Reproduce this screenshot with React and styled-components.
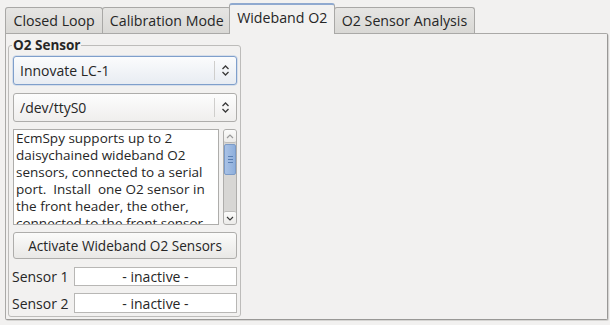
import React from "react";
import styled, { createGlobalStyle, css } from "styled-components";

const Global = createGlobalStyle`
  html, body { margin: 0; padding: 0; background: #f2f1f0; }
  body { font-family: "Open Sans", "Noto Sans", sans-serif; color: #262626; font-size: 13.5px; }
  * { box-sizing: border-box; }
`;

const Root = styled.div`
  width: 610px;
  height: 325px;
  padding: 3px 3px 0 5px;
`;

const TabBar = styled.div`
  display: flex;
  align-items: flex-end;
  height: 30px;
  position: relative;
  z-index: 1;
`;

const Tab = styled.div`
  height: 26px;
  padding: 0 ${(p) => p.$pad || 6.5}px;
  display: flex;
  align-items: center;
  font-size: 14.2px;
  border: 1px solid #a9a8a6;
  border-bottom: none;
  border-radius: 3px 3px 0 0;
  background: linear-gradient(#e6e5e3, #d9d8d5);
  margin-right: -1px;
  white-space: nowrap;
  ${(p) =>
    p.$active &&
    css`
      height: 31px;
      margin-bottom: -1px;
      padding-bottom: 4px;
      background: #f2f1f0;
      border-top: 2px solid #8fa9cf;
      margin-left: -1px;
      margin-right: -1px;
      position: relative;
      z-index: 2;
    `}
`;

const Panel = styled.div`
  width: 603px;
  height: 287px;
  border: 1px solid #aaa9a7;
  border-right-color: #999896;
  border-bottom-color: #999896;
  box-shadow: 1px 1px 0 #d6d5d3;
  border-radius: 0 2px 2px 2px;
  padding: 4px 0 0 2px;
`;

const Group = styled.fieldset`
  margin: 0;
  width: 233px;
  border: 1px solid #bdbcba;
  border-radius: 3px;
  padding: 4px 3px 3px 4px;
  display: flex;
  flex-direction: column;
  min-width: 0;
  & > * { flex-shrink: 0; }
`;

const Legend = styled.legend`
  font-weight: bold;
  font-size: 13.5px;
  padding: 0 1px;
  margin-left: -1px;
  line-height: 14px;
`;

const Combo = styled.div`
  height: 29px;
  border: 1px solid ${(p) => (p.$focus ? "#7f9fcb" : "#aeadab")};
  border-radius: 3px;
  background: ${(p) =>
    p.$focus ? "linear-gradient(#fbfcfd, #e8ecf2)" : "linear-gradient(#fdfdfd, #efeeed)"};
  display: flex;
  align-items: center;
  margin-top: ${(p) => p.$mt || 0}px;
  box-shadow: ${(p) => (p.$focus ? "0 0 0 0.5px #b9cbe4" : "none")};
`;

const ComboText = styled.div`
  flex: 1;
  padding-left: 6px;
  font-size: 14px;
`;

const ComboSep = styled.div`
  width: 1px;
  align-self: stretch;
  margin: 4px 0;
  background: #cfcecc;
`;

const ComboArrow = styled.div`
  width: 21px;
  display: flex;
  justify-content: center;
  align-items: center;
`;

const TextRow = styled.div`
  display: flex;
  height: 96px;
  margin-top: 7px;
  gap: 4px;
`;

const TextBox = styled.div`
  flex: 1;
  background: #fff;
  border: 1px solid #aeadab;
  padding: 0 2px;
  overflow: hidden;
  font-size: 13.5px;
  line-height: 17px;
`;

const ScrollBar = styled.div`
  width: 14px;
  border: 1px solid #aeadab;
  border-radius: 3px;
  background: #d7d6d4;
  display: flex;
  flex-direction: column;
`;

const ScrollBtn = styled.div`
  height: 13px;
  background: linear-gradient(#fbfbfa, #ecebe9);
  border-radius: 2px;
  display: flex;
  align-items: center;
  justify-content: center;
  ${(p) => (p.$bottom ? "border-top: 1px solid #bdbcba;" : "border-bottom: 1px solid #bdbcba;")}
`;

const Thumb = styled.div`
  height: 31px;
  margin-top: 1px;
  background: linear-gradient(90deg, #a9c2e6, #8eafdc);
  border: 1px solid #7b9bc8;
  border-radius: 2px;
  display: flex;
  flex-direction: column;
  align-items: center;
  justify-content: center;
  gap: 2px;
`;

const Grip = styled.div`
  width: 5px;
  height: 1px;
  background: #5a7fb3;
`;

const Track = styled.div`
  flex: 1;
`;

const Button = styled.button`
  margin-top: 7px;
  height: 27px;
  border: 1px solid #aeadab;
  border-radius: 3px;
  background: linear-gradient(#fbfbfa, #e9e8e6);
  font-family: inherit;
  font-size: 13.6px;
  color: inherit;
  padding: 0;
`;

const SensorRow = styled.div`
  display: flex;
  align-items: center;
  margin-top: ${(p) => p.$mt}px;
  height: ${(p) => p.$h}px;
`;

const SensorLabel = styled.div`
  width: 62px;
  font-size: 14px;
  margin-left: -1px;
`;

const SensorField = styled.div`
  flex: 1;
  height: 100%;
  background: #fff;
  border: 1px solid #b8b7b5;
  display: flex;
  align-items: center;
  justify-content: center;
  font-size: 14px;
`;

const UpDown = () => (
  <svg width="9" height="13" viewBox="0 0 9 13" fill="none" stroke="#3a3a3a" strokeWidth="1.3">
    <path d="M1.5 5 L4.5 2 L7.5 5" />
    <path d="M1.5 8 L4.5 11 L7.5 8" />
  </svg>
);

const Chevron = ({ down }) => (
  <svg width="8" height="5" viewBox="0 0 8 5" fill="none" stroke={down ? "#3a3a3a" : "#9a9a9a"} strokeWidth="1.2">
    {down ? <path d="M1 1 L4 4 L7 1" /> : <path d="M1 4 L4 1 L7 4" />}
  </svg>
);

export default function App() {
  return (
    <Root>
      <Global />
      <TabBar>
        <Tab $pad={7.5}>Closed Loop</Tab>
        <Tab>Calibration Mode</Tab>
        <Tab $active $pad={7}>Wideband O2</Tab>
        <Tab>O2 Sensor Analysis</Tab>
      </TabBar>
      <Panel>
        <Group>
          <Legend>O2 Sensor</Legend>
          <Combo $focus>
            <ComboText>Innovate LC-1</ComboText>
            <ComboSep />
            <ComboArrow>
              <UpDown />
            </ComboArrow>
          </Combo>
          <Combo $mt={8}>
            <ComboText>/dev/ttyS0</ComboText>
            <ComboSep />
            <ComboArrow>
              <UpDown />
            </ComboArrow>
          </Combo>
          <TextRow>
            <TextBox>
              EcmSpy supports up to 2 daisychained wideband O2 sensors, connected to a serial port.&nbsp; Install&nbsp; one O2 sensor in the front header, the other, connected to the front sensor, in the rear header.
            </TextBox>
            <ScrollBar>
              <ScrollBtn>
                <Chevron />
              </ScrollBtn>
              <Thumb>
                <Grip />
                <Grip />
                <Grip />
              </Thumb>
              <Track />
              <ScrollBtn $bottom>
                <Chevron down />
              </ScrollBtn>
            </ScrollBar>
          </TextRow>
          <Button>Activate Wideband O2 Sensors</Button>
          <SensorRow $mt={8} $h={19}>
            <SensorLabel>Sensor 1</SensorLabel>
            <SensorField>- inactive -</SensorField>
          </SensorRow>
          <SensorRow $mt={7} $h={20}>
            <SensorLabel>Sensor 2</SensorLabel>
            <SensorField>- inactive -</SensorField>
          </SensorRow>
        </Group>
      </Panel>
    </Root>
  );
}
